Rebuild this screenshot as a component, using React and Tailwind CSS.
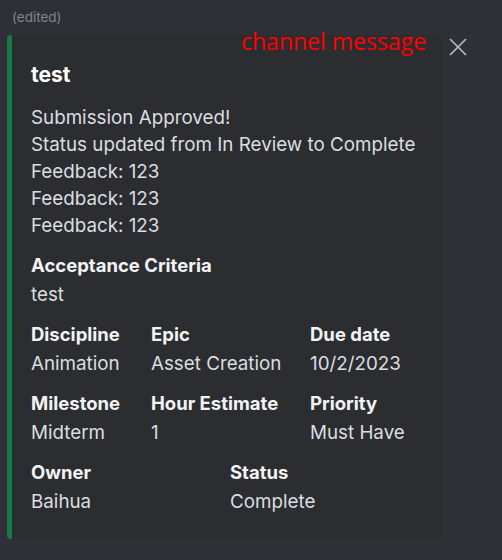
import { X } from "lucide-react";

const font = { fontFamily: 'Inter, "Noto Sans", sans-serif' };

function Field({ name, value }) {
  return (
    <div className="flex flex-col">
      <div className="text-[18.5px] leading-[29px] font-bold text-[#f2f3f5]">{name}</div>
      <div className="text-[18.8px] leading-[30px] text-[#dbdee1]">{value}</div>
    </div>
  );
}

export default function App() {
  return (
    <div className="relative w-[502px] h-[560px] bg-[#2e3035] overflow-hidden" style={font}>
      <div className="h-[35px] pl-[12px] pt-[8px] text-[13.5px] leading-[18px] text-[#80848e]">(edited)</div>

      {/* overlay label */}
      <span
        className="absolute left-[241px] top-[26px] text-[23px] leading-[30px] text-[#ff0000]"
        style={{ fontFamily: '"Open Sans", "Noto Sans", sans-serif' }}
      >
        channel message
      </span>

      <div className="flex items-start">
        {/* EMBED */}
        <div className="ml-[7px] w-[436px] h-[504px] flex rounded-[4px] bg-[#2b2d31] overflow-hidden">
          <div className="w-[5px] shrink-0 bg-[#177a4b]" />
          <div className="flex-1 pl-[19px] pt-[26px]">
            <div className="text-[21px] leading-[28px] font-bold text-white">test</div>

            <div className="mt-[15px] text-[18.8px] leading-[27px] text-[#dbdee1]">
              <div>Submission Approved!</div>
              <div>Status updated from In Review to Complete</div>
              <div>Feedback: 123</div>
              <div>Feedback: 123</div>
              <div>Feedback: 123</div>
            </div>

            <div className="mt-[12px] flex flex-col gap-[10px]">
              <Field name="Acceptance Criteria" value="test" />
              <div className="grid grid-cols-[120px_159px_1fr]">
                <Field name="Discipline" value="Animation" />
                <Field name="Epic" value="Asset Creation" />
                <Field name="Due date" value="10/2/2023" />
              </div>
              <div className="grid grid-cols-[120px_159px_1fr]">
                <Field name="Milestone" value="Midterm" />
                <Field name="Hour Estimate" value="1" />
                <Field name="Priority" value="Must Have" />
              </div>
              <div className="grid grid-cols-[199px_1fr]">
                <Field name="Owner" value="Baihua" />
                <Field name="Status" value="Complete" />
              </div>
            </div>
          </div>
        </div>

        <X className="ml-[0px] mt-[-3px] text-[#b5bac1]" size={30} strokeWidth={1.4} />
      </div>
    </div>
  );
}
